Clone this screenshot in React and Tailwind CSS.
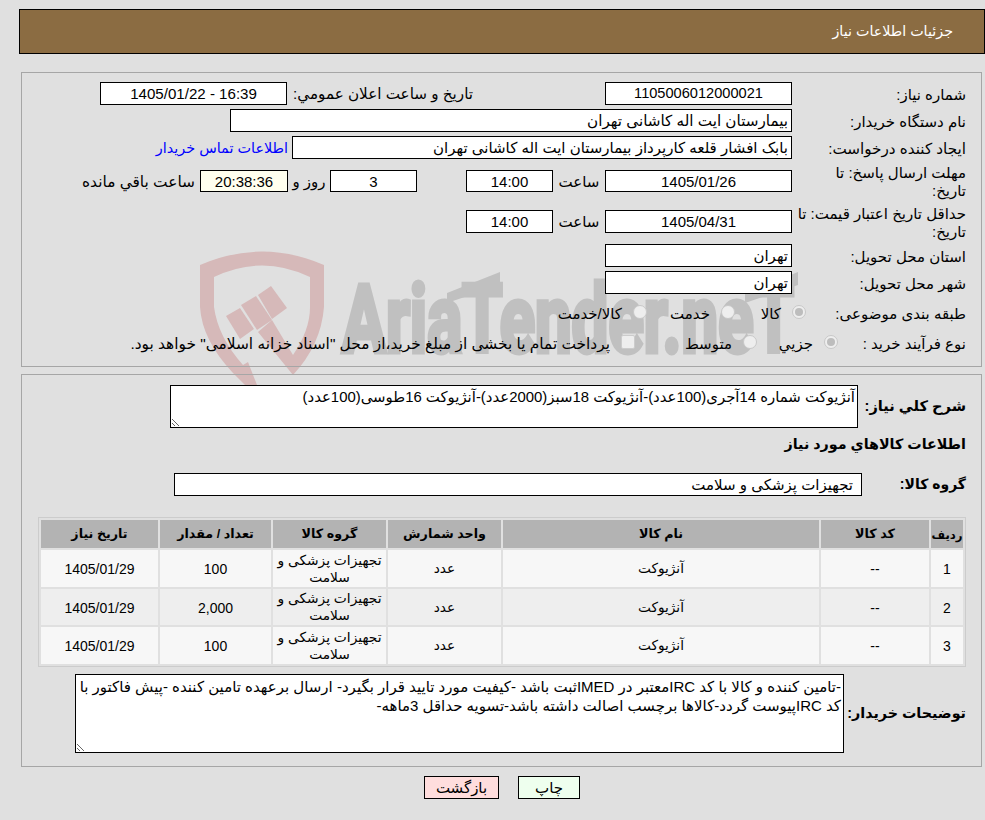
import React from "react";

function Field({ className = "h-[23px]", children }) {
  return (
    <div className={`shrink-0 border border-black bg-white flex items-center leading-none ${className}`}>
      {children}
    </div>
  );
}

function Radio({ on }) {
  return (
    <span className="w-[14px] h-[14px] mb-[3px] shrink-0 rounded-full border border-[#c8c8c8] bg-[#eeeeee] flex items-center justify-center">
      {on && <span className="w-[8px] h-[8px] rounded-full bg-[#bdbdbd]" />}
    </span>
  );
}

function Option({ width, on, box, children }) {
  return (
    <div className={`flex items-center gap-[11px] shrink-0 ${width}`}>
      {box ? <span className="w-[14px] h-[14px] mb-[3px] shrink-0 rounded-[2px] border border-[#cccccc] bg-[#eeeeee]" /> : <Radio on={on} />}
      <span className="whitespace-nowrap pt-[2px]">{children}</span>
    </div>
  );
}

function Row({ className = "h-[27px]", children }) {
  return <div className={`flex items-center ${className}`}>{children}</div>;
}

function Label({ className = "w-[174px]", children }) {
  return <div className={`shrink-0 leading-[18px] pl-[4px] pt-[2px] ${className}`}>{children}</div>;
}

function Watermark() {
  return (
    <svg dir="ltr" className="absolute left-[190px] top-[240px] -z-10" width="620" height="160" viewBox="0 0 620 160" aria-hidden="true">
      <path
        fill="#d6b9b9"
        d="M10 25 Q72 -2 134 25 L134 67 Q131 105 103 135 L68 92 L82 80 L103 115 Q120 90 120 67 L120 37 Q72 14 24 37 L24 67 Q28 97 53 125 L58 122 L67 145 L55 145 L43 133 Q12 100 10 67 Z"
      />
      <g fill="#d6b9b9">
        <polygon points="36,76 50,68 64,89 50,99" />
        <polygon points="51,65 66,56 82,80 67,90" />
        <polygon points="68,55 81,46 97,68 82,79" />
      </g>
      <text
        x="152"
        y="112"
        direction="ltr"
        textAnchor="start"
        textLength="452"
        lengthAdjust="spacingAndGlyphs"
        fontFamily="Roboto, sans-serif"
        fontWeight="700"
        fontSize="94"
        fill="#c0c0c0"
        stroke="#c0c0c0"
        strokeWidth="5"
      >
        AriaTender.neT
      </text>
      <polygon points="257,53 310,32 310,45 257,63" fill="#c0c0c0" />
      <polygon points="555,53 608,32 608,45 555,63" fill="#c0c0c0" />
    </svg>
  );
}

const rows = [
  { n: "1", q: "100", bg: "bg-[#f7f7f7]", h: "h-[37px]" },
  { n: "2", q: "2,000", bg: "bg-[#eeeeee]", h: "h-[36px]" },
  { n: "3", q: "100", bg: "bg-[#f7f7f7]", h: "h-[37px]" },
];

const heads = [
  ["ردیف", "w-[32px] text-[11.7px]"],
  ["کد کالا", "w-[108px]"],
  ["نام کالا", "w-[316px]"],
  ["واحد شمارش", "w-[113px]"],
  ["گروه کالا", "w-[113px]"],
  ["تعداد / مقدار", "w-[111px]"],
  ["تاریخ نیاز", "w-[117px]"],
];

export default function App() {
  return (
    <div
      dir="rtl"
      className="relative isolate min-h-[820px] w-[985px] overflow-hidden bg-[#e0e0e0] text-[15px] text-black font-['Liberation_Sans','DejaVu_Sans',sans-serif]"
    >
      <Watermark />

      <div className="pt-[9px] pl-[19px]">
        <div className="h-[45px] border border-black bg-[#8b6c42] flex items-center pr-[31px] text-white text-[14.3px]">
          جزئیات اطلاعات نیاز
        </div>
      </div>

      <section className="mt-[18px] mr-[3px] w-[961px] border border-[#a6a6a6] pt-[7px] pb-[10px] pr-[15px]">
        <Row>
          <Label>شماره نياز:</Label>
          <Field className="h-[23px] w-[187px] justify-center text-[14.6px]">1105006012000021</Field>
          <div className="w-[186px] mr-[132px] pt-[2px] shrink-0 whitespace-nowrap text-[15.2px]">تاريخ و ساعت اعلان عمومي:</div>
          <Field className="h-[23px] w-[187px] justify-center text-[15.1px]">
            <span dir="ltr">1405/01/22 - 16:39</span>
          </Field>
        </Row>
        <Row>
          <Label>نام دستگاه خريدار:</Label>
          <Field className="h-[23px] w-[562px] pr-[3px] text-[15.2px]">بیمارستان ایت اله کاشانی تهران</Field>
        </Row>
        <Row>
          <Label className="w-[174px] text-[15.2px]">ایجاد کننده درخواست:</Label>
          <Field className="h-[23px] w-[500px] pr-[3px]">بابک افشار قلعه کارپرداز بیمارستان ایت اله کاشانی تهران</Field>
          <a className="mr-[4px] pt-[2px] text-[#0000ff] whitespace-nowrap text-[14.4px]">اطلاعات تماس خریدار</a>
        </Row>
        <Row className="h-[40px]">
          <Label>مهلت ارسال پاسخ: تا<br />تاریخ:</Label>
          <Field className="h-[22px] w-[187px] justify-center text-[15px]">1405/01/26</Field>
          <div className="w-[52px] pt-[2px] text-center shrink-0">ساعت</div>
          <Field className="h-[22px] w-[87px] justify-center text-[15px]">14:00</Field>
          <div className="w-[49px] shrink-0" />
          <Field className="h-[22px] w-[87px] justify-center text-[15px]">3</Field>
          <div className="w-[42px] pt-[2px] text-center shrink-0">روز و</div>
          <Field className="h-[22px] w-[88px] justify-center !bg-[#ffffee] text-[15px]">20:38:36</Field>
          <div className="mr-[5px] pt-[2px] whitespace-nowrap text-[15.4px]">ساعت باقي مانده</div>
        </Row>
        <Row className="h-[41px]">
          <Label>حداقل تاریخ اعتبار قیمت: تا<br />تاریخ:</Label>
          <Field className="h-[23px] w-[187px] justify-center text-[15px]">1405/04/31</Field>
          <div className="w-[52px] pt-[2px] text-center shrink-0">ساعت</div>
          <Field className="h-[23px] w-[87px] justify-center text-[15px]">14:00</Field>
        </Row>
        <Row>
          <Label>استان محل تحویل:</Label>
          <Field className="h-[23px] w-[187px] pr-[3px]">تهران</Field>
        </Row>
        <Row>
          <Label>شهر محل تحویل:</Label>
          <Field className="h-[23px] w-[187px] pr-[3px]">تهران</Field>
        </Row>
        <Row className="h-[34px]">
          <Label className="w-[160px]">طبقه بندی موضوعی:</Label>
          <Option width="w-[71px]" on>کالا</Option>
          <Option width="w-[88px]">خدمت</Option>
          <Option width="w-[100px]">کالا/خدمت</Option>
        </Row>
        <Row className="h-[26px]">
          <Label className="w-[128px]">نوع فرآيند خريد :</Label>
          <Option width="w-[81px]" on>جزيي</Option>
          <Option width="w-[122px]">متوسط</Option>
          <Option width="w-[500px]" box>
            <span className="text-[15.4px]">پرداخت تمام یا بخشی از مبلغ خرید،از محل "اسناد خزانه اسلامی" خواهد بود.</span>
          </Option>
        </Row>
      </section>

      <section className="mt-[7px] mr-[3px] w-[961px] border border-[#a6a6a6] pt-[10px] pb-[13px] pr-[15px]">
        <div className="flex items-center">
          <div className="w-[108px] shrink-0 font-bold text-[14.6px]">شرح كلي نياز:</div>
          <textarea
            readOnly
            className="w-[688px] h-[43px] shrink-0 border border-black bg-white px-[2px] pt-[1px] pb-0 leading-[20px] outline-none text-[14.9px]"
            defaultValue="آنژیوکت شماره 14آجری(100عدد)-آنژیوکت 18سبز(2000عدد)-آنژیوکت 16طوسی(100عدد)"
          />
        </div>
        <div className="mt-[7px] h-[18px] leading-[18px] font-bold text-[14.3px]">اطلاعات كالاهاي مورد نياز</div>
        <div className="mt-[20px] flex items-center">
          <div className="w-[104px] shrink-0 font-bold text-[14px]">گروه کالا:</div>
          <Field className="h-[23px] w-[688px] pr-[8px]">تجهیزات پزشکی و سلامت</Field>
        </div>
        <table className="mt-[21px] w-[928px] table-fixed border-separate border-spacing-[2px] border border-[#cccccc] text-[14px] text-center">
          <thead>
            <tr className="h-[28px] bg-[#b3b3b3] text-[12.7px] font-bold">
              {heads.map(([t, w]) => (
                <th key={t} className={`${w} p-0 pt-[1px] font-bold`}>{t}</th>
              ))}
            </tr>
          </thead>
          <tbody>
            {rows.map((r) => (
              <tr key={r.n} className={`${r.bg} ${r.h}`}>
                <td className="p-0 pt-[2px]">{r.n}</td>
                <td className="p-0 pt-[2px]">--</td>
                <td className="p-0 pt-[2px] text-[13.7px]">آنژیوکت</td>
                <td className="p-0 pt-[2px] text-[13.7px]">عدد</td>
                <td className="p-0 leading-[17px] text-[13.8px]">تجهیزات پزشکی و سلامت</td>
                <td className="p-0 pt-[2px]">{r.q}</td>
                <td className="p-0 pt-[2px]">1405/01/29</td>
              </tr>
            ))}
          </tbody>
        </table>
        <div className="mt-[7px] flex items-center">
          <div className="w-[122px] shrink-0 font-bold text-[14.3px]">توضیحات خریدار:</div>
          <textarea
            readOnly
            className="w-[769px] h-[79px] shrink-0 border border-black bg-white px-[2px] pt-[3px] pb-0 leading-[18.5px] outline-none text-[15px]"
            defaultValue="-تامین کننده و کالا با کد IRCمعتبر در IMEDثبت باشد -کیفیت مورد تایید قرار بگیرد- ارسال برعهده تامین کننده -پیش فاکتور با کد IRCپیوست گردد-کالاها برچسب اصالت داشته باشد-تسویه حداقل 3ماهه-"
          />
        </div>
      </section>

      <div className="mt-[9px] flex justify-center gap-[19px] pl-[19px]">
        <button className="w-[62px] h-[23px] border border-black bg-[#eeffee] leading-none">چاپ</button>
        <button className="w-[75px] h-[23px] border border-black bg-[#ffdddd] leading-none">بازگشت</button>
      </div>
    </div>
  );
}
